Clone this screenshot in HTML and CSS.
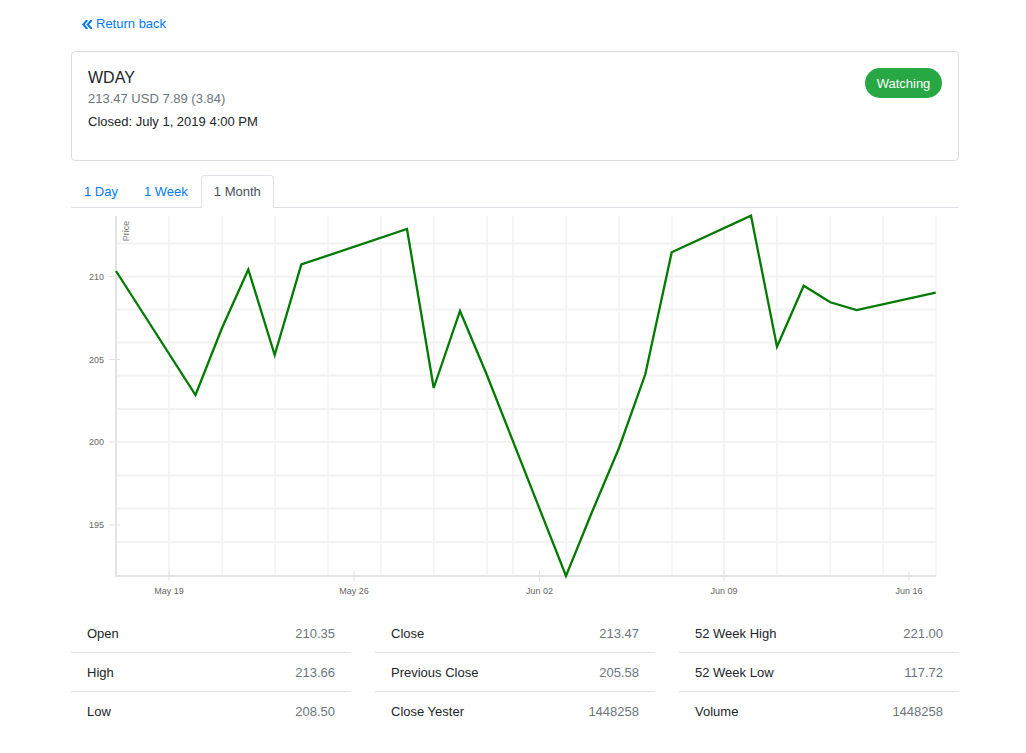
FILE: index.html
```html
<!DOCTYPE html>
<html>
<head>
<meta charset="utf-8">
<title>WDAY</title>
<link rel="stylesheet" href="styles.css">
</head>
<body>
<div class="page">
  <a class="back" href="#">
    <svg class="back-icon" width="10" height="9" viewBox="0 0 10 9"><polyline points="4.6,0.8 1.3,4.5 4.6,8.2" /><polyline points="9,0.8 5.7,4.5 9,8.2" /></svg>
    Return back
  </a>

  <div class="card">
    <div class="info">
      <div class="symbol">WDAY</div>
      <div class="price">213.47 USD 7.89 (3.84)</div>
      <div class="closed">Closed: July 1, 2019 4:00 PM</div>
    </div>
    <button class="watch">Watching</button>
  </div>

  <ul class="tabs">
    <li class="tab">1 Day</li>
    <li class="tab">1 Week</li>
    <li class="tab active">1 Month</li>
  </ul>

  <svg class="chart" width="888" height="406" viewBox="71 208 888 406">
    <g class="vgrid">
      <line x1="169" y1="216" x2="169" y2="576"/>
      <line x1="222" y1="216" x2="222" y2="576"/>
      <line x1="275" y1="216" x2="275" y2="576"/>
      <line x1="328" y1="216" x2="328" y2="576"/>
      <line x1="381" y1="216" x2="381" y2="576"/>
      <line x1="434" y1="216" x2="434" y2="576"/>
      <line x1="487" y1="216" x2="487" y2="576"/>
      <line x1="513" y1="216" x2="513" y2="576"/>
      <line x1="566" y1="216" x2="566" y2="576"/>
      <line x1="619" y1="216" x2="619" y2="576"/>
      <line x1="672" y1="216" x2="672" y2="576"/>
      <line x1="724" y1="216" x2="724" y2="576"/>
      <line x1="777" y1="216" x2="777" y2="576"/>
      <line x1="830" y1="216" x2="830" y2="576"/>
      <line x1="883" y1="216" x2="883" y2="576"/>
      <line x1="936" y1="216" x2="936" y2="576"/>
    </g>
    <g class="hgrid">
      <line x1="116" y1="243.5" x2="936" y2="243.5"/>
      <line x1="116" y1="276.5" x2="936" y2="276.5"/>
      <line x1="116" y1="309.5" x2="936" y2="309.5"/>
      <line x1="116" y1="342.5" x2="936" y2="342.5"/>
      <line x1="116" y1="375.5" x2="936" y2="375.5"/>
      <line x1="116" y1="409" x2="936" y2="409"/>
      <line x1="116" y1="442" x2="936" y2="442"/>
      <line x1="116" y1="475.5" x2="936" y2="475.5"/>
      <line x1="116" y1="508.5" x2="936" y2="508.5"/>
      <line x1="116" y1="542" x2="936" y2="542"/>
    </g>
    <g class="ticks">
      <line x1="109" y1="276.5" x2="116" y2="276.5"/>
      <line x1="109" y1="359.5" x2="120" y2="359.5"/>
      <line x1="109" y1="442" x2="116" y2="442"/>
      <line x1="109" y1="525" x2="120" y2="525"/>
      <line x1="169" y1="571" x2="169" y2="581"/>
      <line x1="354" y1="571" x2="354" y2="581"/>
      <line x1="539.5" y1="571" x2="539.5" y2="581"/>
      <line x1="724" y1="571" x2="724" y2="581"/>
      <line x1="909" y1="571" x2="909" y2="581"/>
    </g>
    <g class="axis">
      <line x1="116" y1="216" x2="116" y2="577"/>
      <line x1="115" y1="576" x2="936" y2="576"/>
    </g>
    <g class="ylabels">
      <text x="104" y="279.5">210</text>
      <text x="104" y="362.5">205</text>
      <text x="104" y="445">200</text>
      <text x="104" y="528">195</text>
    </g>
    <g class="xlabels">
      <text x="169" y="594">May 19</text>
      <text x="354" y="594">May 26</text>
      <text x="539.5" y="594">Jun 02</text>
      <text x="724" y="594">Jun 09</text>
      <text x="909" y="594">Jun 16</text>
    </g>
    <text class="ytitle" transform="translate(129 231) rotate(-90)">Price</text>
    <polyline class="series" points="116,271 195.5,395 222,328 248.3,269.5 274.7,355 301.3,264.5 407,229 433.7,388 460,311 486.5,374 566,576 592,512 619,448 645.3,374.3 671.7,252.3 751,215.7 777,346.7 803.7,285.7 830.3,302.3 856.7,310 935.7,292.7"/>
  </svg>

  <div class="stats">
    <div class="col">
      <div class="row"><span class="label">Open</span><span class="value">210.35</span></div>
      <div class="row"><span class="label">High</span><span class="value">213.66</span></div>
      <div class="row"><span class="label">Low</span><span class="value">208.50</span></div>
    </div>
    <div class="col">
      <div class="row"><span class="label">Close</span><span class="value">213.47</span></div>
      <div class="row"><span class="label">Previous Close</span><span class="value">205.58</span></div>
      <div class="row"><span class="label">Close Yester</span><span class="value">1448258</span></div>
    </div>
    <div class="col">
      <div class="row"><span class="label">52 Week High</span><span class="value">221.00</span></div>
      <div class="row"><span class="label">52 Week Low</span><span class="value">117.72</span></div>
      <div class="row"><span class="label">Volume</span><span class="value">1448258</span></div>
    </div>
  </div>
</div>
</body>
</html>
```

FILE: styles.css
```css
html, body {
  margin: 0;
  padding: 0;
  background: #fff;
}

body {
  font-family: "Liberation Sans", Arial, sans-serif;
  font-size: 13px;
  color: #212529;
}

.page {
  width: 888px;
  margin-left: 71px;
}

.back {
  display: flex;
  align-items: center;
  gap: 4px;
  width: max-content;
  margin: 15px 0 0 11px;
  line-height: 18px;
  color: #007bff;
  text-decoration: none;
}

.back-icon {
  display: block;
}

.back-icon polyline {
  fill: none;
  stroke: #007bff;
  stroke-width: 2;
  stroke-linecap: square;
}

.card {
  margin-top: 18px;
  box-sizing: border-box;
  height: 110px;
  border: 1px solid #dcdcdc;
  border-radius: 4px;
  padding: 16px 16px 0 16px;
  display: flex;
  justify-content: space-between;
  align-items: flex-start;
}

.symbol {
  font-size: 16px;
  line-height: 19px;
}

.price {
  margin-top: 3px;
  line-height: 18px;
  color: #6c757d;
}

.closed {
  margin-top: 5px;
  line-height: 18px;
}

.watch {
  width: 77px;
  height: 30px;
  border: 0;
  border-radius: 15px;
  background: #28a745;
  color: #fff;
  font-family: inherit;
  font-size: 13px;
  padding: 0;
}

.tabs {
  margin: 14px 0 0;
  padding: 0;
  list-style: none;
  display: flex;
  border-bottom: 1px solid #dee2e6;
}

.tab {
  height: 31px;
  line-height: 31px;
  padding: 0 12px;
  border: 1px solid transparent;
  border-radius: 4px 4px 0 0;
  margin-bottom: -1px;
  color: #007bff;
}

.tab.active {
  color: #495057;
  background: #fff;
  border-color: #dee2e6 #dee2e6 #fff;
}

.chart {
  display: block;
}

.vgrid line {
  stroke: #ebebeb;
  stroke-width: 1;
}

.hgrid line {
  stroke: #f2f2f2;
  stroke-width: 2;
}

.ticks line {
  stroke: #e3e3e3;
  stroke-width: 1;
}

.axis line {
  stroke: #e3e3e3;
  stroke-width: 2;
}

.ylabels text {
  font-family: "Liberation Sans", Arial, sans-serif;
  font-size: 9px;
  fill: #666;
  text-anchor: end;
}

.xlabels text {
  font-family: "Liberation Sans", Arial, sans-serif;
  font-size: 9px;
  fill: #666;
  text-anchor: middle;
}

.ytitle {
  font-family: "Liberation Sans", Arial, sans-serif;
  font-size: 9px;
  fill: #777;
  text-anchor: middle;
}

.series {
  fill: none;
  stroke: #007a00;
  stroke-width: 2.3;
  stroke-linejoin: miter;
}

.stats {
  display: grid;
  grid-template-columns: repeat(3, 280px);
  column-gap: 24px;
}

.row {
  display: flex;
  justify-content: space-between;
  align-items: center;
  height: 38px;
  padding: 0 16px;
  border-bottom: 1px solid #e3e3e3;
}

.row:last-child {
  border-bottom: 0;
}

.value {
  color: #6c757d;
}
```
